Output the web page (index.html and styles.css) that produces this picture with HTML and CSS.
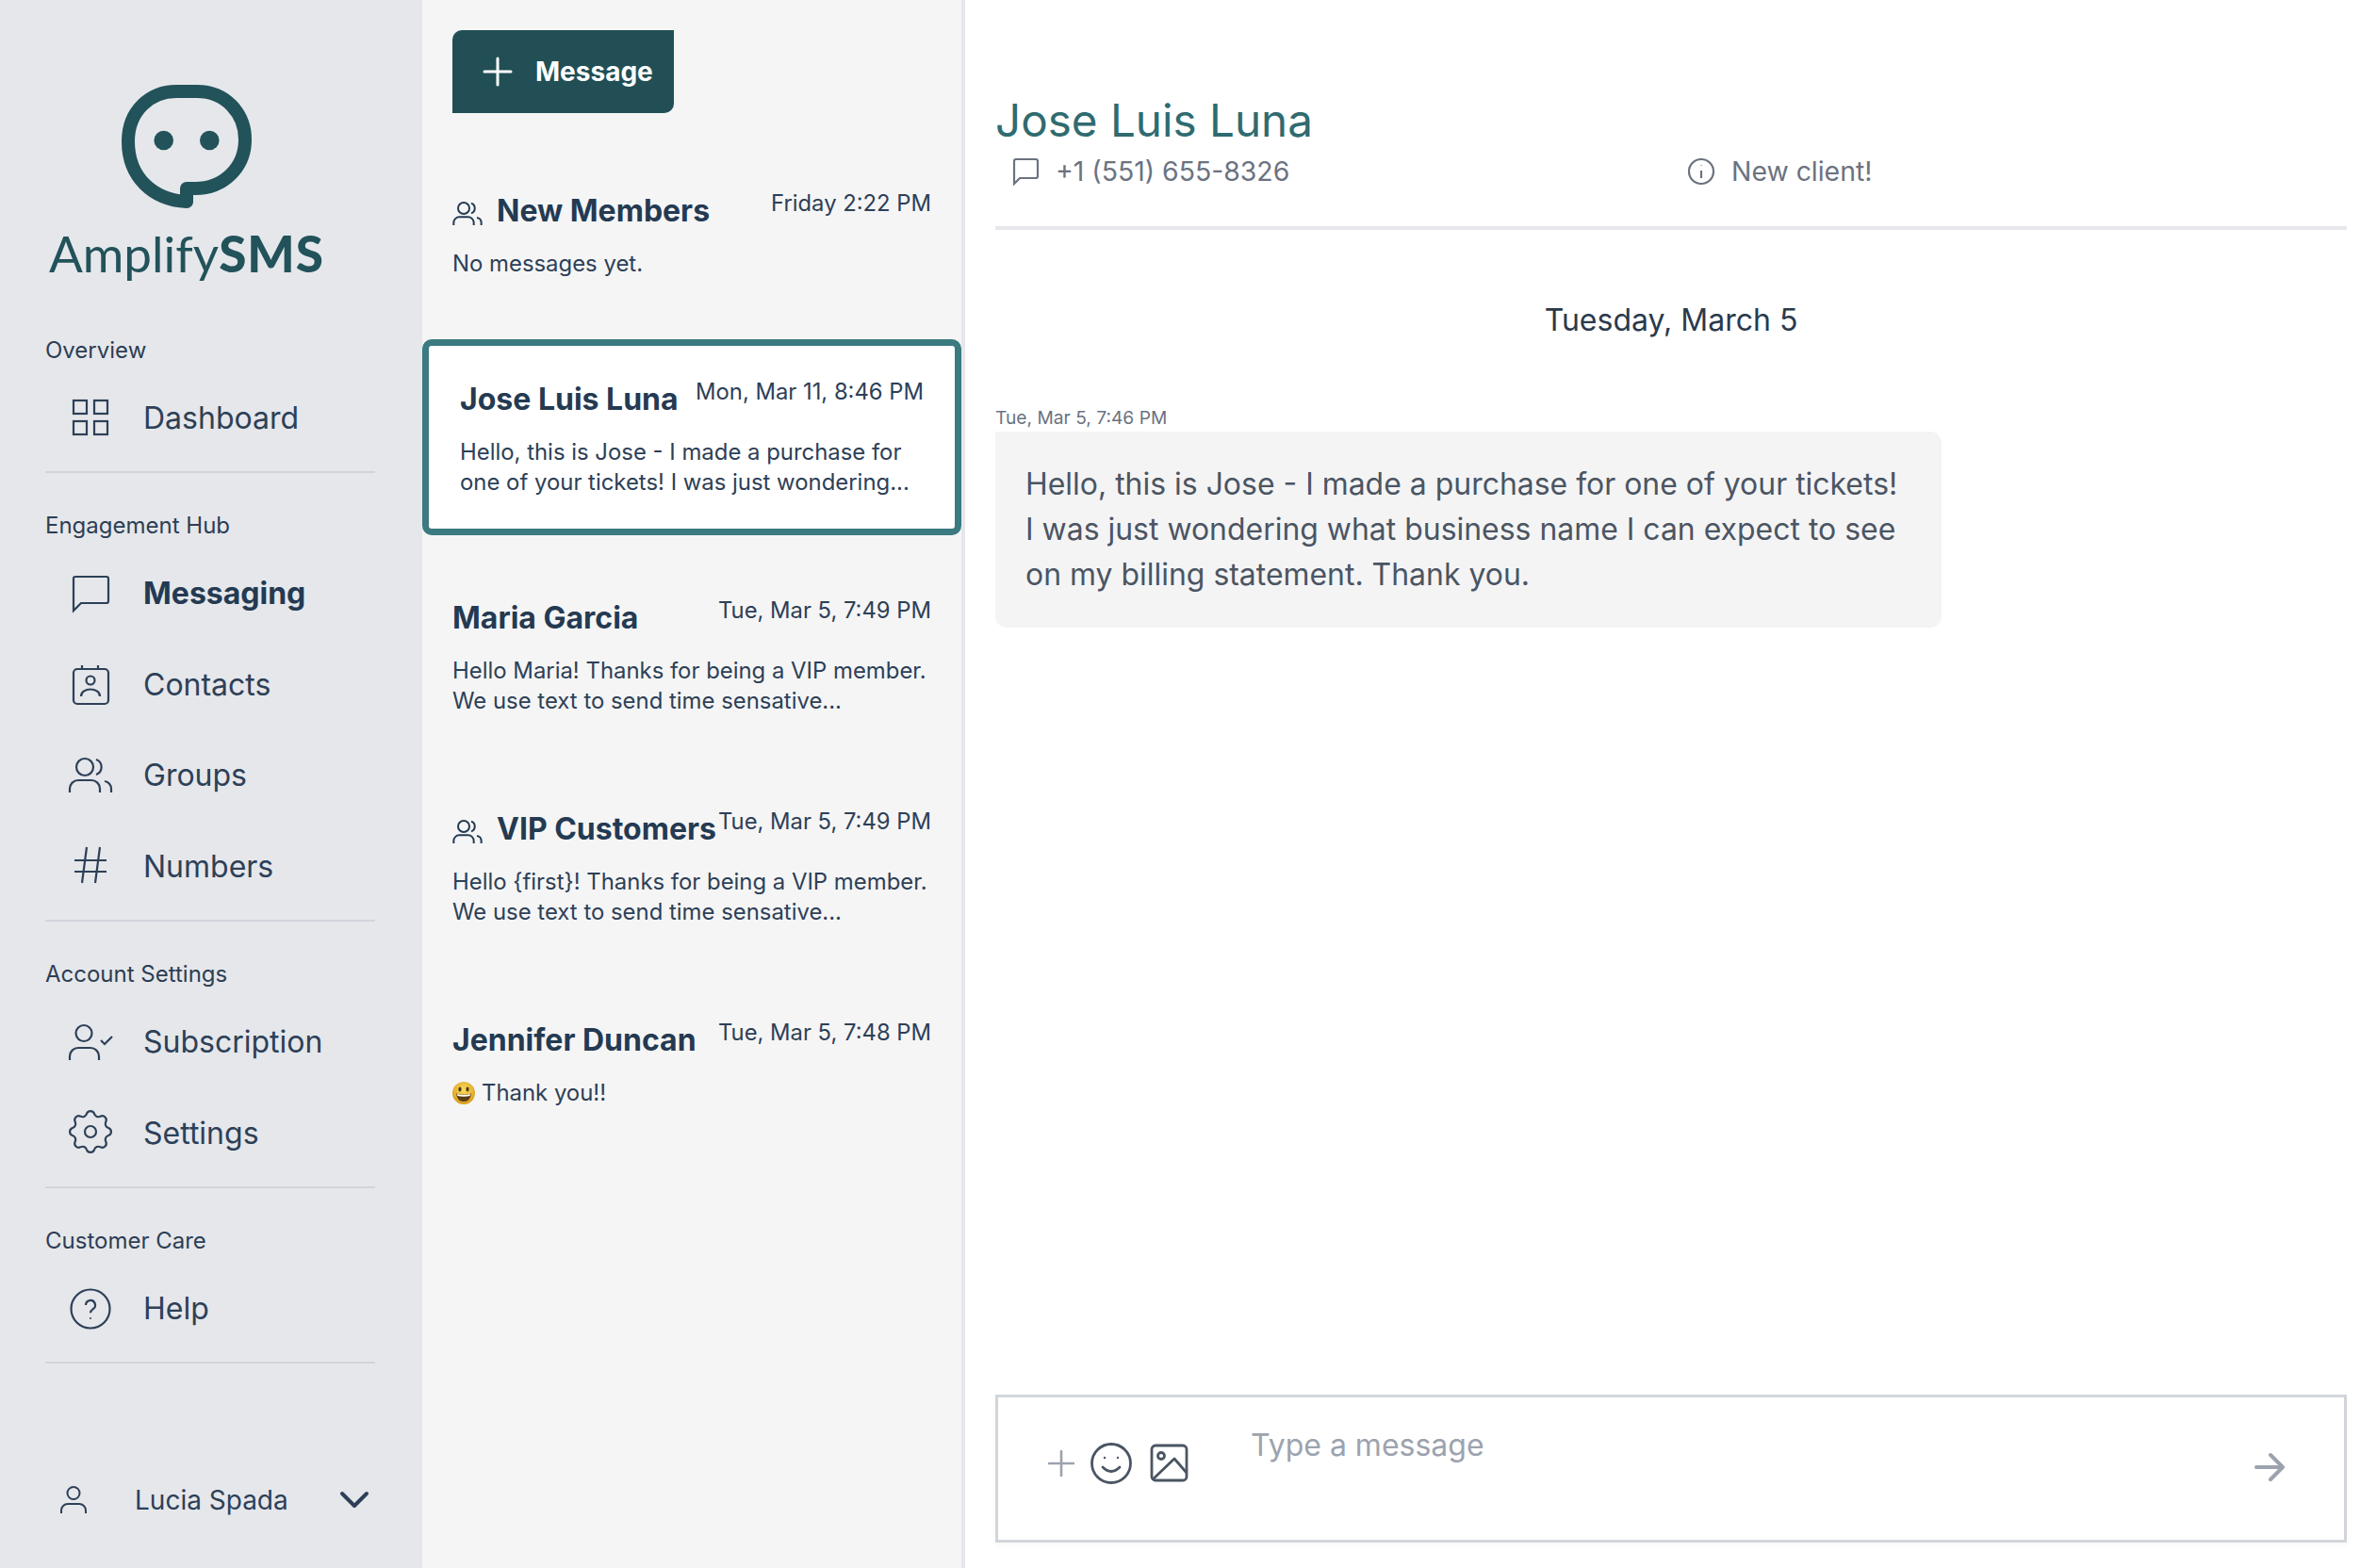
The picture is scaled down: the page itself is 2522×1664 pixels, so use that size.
FILE: index.html
```html
<!DOCTYPE html>
<html lang="en">
<head>
  <meta charset="UTF-8" />
  <title>AmplifySMS - Messaging</title>
  <meta name="viewport" content="width=device-width, initial-scale=1.0" />
  <link rel="stylesheet" href="styles.css">
</head>
<body>
  <svg class="defs" width="0" height="0">
    <symbol id="i-group" viewBox="0 0 48 48">
      <circle cx="18" cy="15" r="9" />
      <path d="M30 7a8.5 8.5 0 0 1 0 16" />
      <path d="M2 42v-4a9 9 0 0 1 9-9h14a9 9 0 0 1 9 9v4" />
      <path d="M39 30a8 8 0 0 1 7 8v4" />
    </symbol>
  </svg>

  <div class="app">
    <aside class="sidebar">
      <div class="brand">
        <svg class="brand-mark" viewBox="0 0 138 131">
          <path d="M69 124C33 122 7 98 7 60C7 28 30 7 58 7H80C110 7 131 30 131 58C131 88 108 110 78 110H69V124" />
          <circle cx="44.7" cy="59" r="10.3" />
          <circle cx="93.3" cy="59" r="10.3" />
        </svg>
        <div class="brand-name">Amplify<b>SMS</b></div>
      </div>

      <div class="nav-label nav-label-first">Overview</div>
      <a class="nav-item">
        <svg class="icon" viewBox="0 0 48 48">
          <rect x="6" y="6" width="14" height="14" /><rect x="28" y="6" width="14" height="14" />
          <rect x="6" y="28" width="14" height="14" /><rect x="28" y="28" width="14" height="14" />
        </svg>
        Dashboard
      </a>
      <hr class="nav-rule" />

      <div class="nav-label">Engagement Hub</div>
      <a class="nav-item active">
        <svg class="icon" viewBox="0 0 48 48">
          <path d="M6 42V8Q6 6 8 6H41Q43 6 43 8V32Q43 34 41 34H14Z" />
        </svg>
        Messaging
      </a>
      <a class="nav-item">
        <svg class="icon" viewBox="0 0 48 48">
          <rect x="6" y="8" width="37" height="37" rx="4" />
          <path d="M15 4v4M32 4v4" />
          <circle cx="24" cy="20" r="4.5" />
          <path d="M14 37c0-10 20-10 20 0" />
        </svg>
        Contacts
      </a>
      <a class="nav-item">
        <svg class="icon"><use href="#i-group" /></svg>
        Groups
      </a>
      <a class="nav-item">
        <svg class="icon" viewBox="0 0 48 48">
          <path d="M7 18H41M7 30H41M20 4L15 42M34 4L29 42" />
        </svg>
        Numbers
      </a>
      <hr class="nav-rule" />

      <div class="nav-label">Account Settings</div>
      <a class="nav-item">
        <svg class="icon" viewBox="0 0 48 48">
          <circle cx="17" cy="14.5" r="8.5" />
          <path d="M2 43v-4a9 9 0 0 1 9-9h13a9 9 0 0 1 9 9v4" />
          <path d="M35 22l4 4l8-8" />
        </svg>
        Subscription
      </a>
      <a class="nav-item">
        <svg class="icon" viewBox="0 0 48 48">
          <path d="M19.95 3.93A4.3 4.3 0 0 1 28.05 3.93A4.5 4.5 0 0 0 34.62 6.65A4.3 4.3 0 0 1 40.35 12.38A4.5 4.5 0 0 0 43.07 18.95A4.3 4.3 0 0 1 43.07 27.05A4.5 4.5 0 0 0 40.35 33.62A4.3 4.3 0 0 1 34.62 39.35A4.5 4.5 0 0 0 28.05 42.07A4.3 4.3 0 0 1 19.95 42.07A4.5 4.5 0 0 0 13.38 39.35A4.3 4.3 0 0 1 7.65 33.62A4.5 4.5 0 0 0 4.93 27.05A4.3 4.3 0 0 1 4.93 18.95A4.5 4.5 0 0 0 7.65 12.38A4.3 4.3 0 0 1 13.38 6.65A4.5 4.5 0 0 0 19.95 3.93Z" />
          <circle cx="24" cy="23" r="6" />
        </svg>
        Settings
      </a>
      <hr class="nav-rule" />

      <div class="nav-label">Customer Care</div>
      <a class="nav-item">
        <svg class="icon" viewBox="0 0 48 48">
          <circle cx="24" cy="24" r="20.5" />
          <path d="M19 20a5 5 0 1 1 7.5 4.3c-1.5 1-2.5 2-2.5 4" />
          <circle class="dot" cx="24" cy="34" r="1" />
        </svg>
        Help
      </a>
      <hr class="nav-rule" />

      <div class="account">
        <svg class="account-icon" viewBox="0 0 32 32">
          <circle cx="16" cy="8.5" r="6.5" />
          <path d="M3 30v-3a7 7 0 0 1 7-7h12a7 7 0 0 1 7 7v3" />
        </svg>
        <span class="account-name">Lucia Spada</span>
        <svg class="chevron" viewBox="0 0 32 20">
          <path d="M3 3L16 16L29 3" />
        </svg>
      </div>
    </aside>

    <section class="threads">
      <button class="new-btn">
        <svg class="new-plus" viewBox="0 0 32 32"><path d="M16 2V30M2 16H30" /></svg>
        Message
      </button>

      <div class="thread-list">
        <div class="thread thread-first">
          <div class="thread-head">
            <h2 class="thread-name"><svg class="group-icon"><use href="#i-group" /></svg>New Members</h2>
            <span class="thread-time">Friday 2:22 PM</span>
          </div>
          <p class="thread-text">No messages yet.</p>
        </div>

        <div class="thread selected">
          <div class="thread-head">
            <h2 class="thread-name">Jose Luis Luna</h2>
            <span class="thread-time">Mon, Mar 11, 8:46 PM</span>
          </div>
          <p class="thread-text">Hello, this is Jose - I made a purchase for<br />one of your tickets! I was just wondering...</p>
        </div>

        <div class="thread">
          <div class="thread-head">
            <h2 class="thread-name">Maria Garcia</h2>
            <span class="thread-time">Tue, Mar 5, 7:49 PM</span>
          </div>
          <p class="thread-text">Hello Maria! Thanks for being a VIP member.<br />We use text to send time sensative...</p>
        </div>

        <div class="thread">
          <div class="thread-head">
            <h2 class="thread-name"><svg class="group-icon"><use href="#i-group" /></svg>VIP Customers</h2>
            <span class="thread-time">Tue, Mar 5, 7:49 PM</span>
          </div>
          <p class="thread-text">Hello {first}! Thanks for being a VIP member.<br />We use text to send time sensative...</p>
        </div>

        <div class="thread">
          <div class="thread-head">
            <h2 class="thread-name">Jennifer Duncan</h2>
            <span class="thread-time">Tue, Mar 5, 7:48 PM</span>
          </div>
          <p class="thread-text thread-emoji">
            <svg class="emoji" viewBox="0 0 24 24">
              <defs>
                <radialGradient id="face" cx="50%" cy="35%" r="65%">
                  <stop offset="0" stop-color="#fbdc5e" />
                  <stop offset="1" stop-color="#d99a1c" />
                </radialGradient>
              </defs>
              <circle cx="12" cy="12" r="12" fill="url(#face)" />
              <ellipse cx="8" cy="8" rx="1.6" ry="2.4" fill="#4a3a16" />
              <ellipse cx="16" cy="8" rx="1.6" ry="2.4" fill="#4a3a16" />
              <path d="M4 12.5Q12 15 20 12.5Q19 21 12 21Q5 21 4 12.5Z" fill="#5b3d14" />
              <path d="M5 13Q12 15.2 19 13L18.6 15Q12 16.6 5.4 15Z" fill="#fff" />
            </svg>
            Thank you!!
          </p>
        </div>
      </div>
    </section>

    <main class="chat">
      <header class="chat-head">
        <h1 class="chat-title">Jose Luis Luna</h1>
        <div class="chat-meta">
          <div class="meta-item meta-phone">
            <svg class="meta-icon" viewBox="0 0 30 30">
              <path d="M3 28V4Q3 2 5 2H26Q28 2 28 4V20Q28 22 26 22H9Z" />
            </svg>
            +1 (551) 655-8326
          </div>
          <div class="meta-item">
            <svg class="meta-icon" viewBox="0 0 30 30">
              <circle cx="15" cy="15" r="13" />
              <path d="M15 14V22M15 8.5V9" />
            </svg>
            New client!
          </div>
        </div>
      </header>

      <div class="day">Tuesday, March 5</div>
      <div class="stamp">Tue, Mar 5, 7:46 PM</div>
      <div class="bubble">Hello, this is Jose - I made a purchase for one of your tickets! I was just wondering what business name I can expect to see on my billing statement. Thank you.</div>

      <div class="composer">
        <div class="tools">
          <svg class="tool-plus" viewBox="0 0 28 28"><path d="M14 1V27M1 14H27" /></svg>
          <svg class="tool-smile" viewBox="0 0 44 44">
            <circle cx="22" cy="22" r="20.5" />
            <path d="M13 26Q22 35 31 26" />
            <circle class="dot" cx="15" cy="16" r="1.2" />
            <circle class="dot" cx="29" cy="16" r="1.2" />
          </svg>
          <svg class="tool-image" viewBox="0 0 41 41">
            <rect x="2" y="2" width="37" height="37" rx="4" />
            <circle cx="12" cy="13" r="3.5" />
            <path d="M3 38L26 16L39 31" />
          </svg>
        </div>
        <div class="placeholder">Type a message</div>
        <svg class="send" viewBox="0 0 32 32"><path d="M2 16H30M17 3L30 16L17 29" /></svg>
      </div>
    </main>
  </div>
</body>
</html>
```

FILE: styles.css
```css
* {
  margin: 0;
  padding: 0;
  box-sizing: border-box;
  font-family: 'Inter', sans-serif;
}
body {
  background: white;
  color: #243a52;
}
.defs {
  position: absolute;
}
.defs symbol {
  overflow: visible;
}
.app {
  display: flex;
  height: 1664px;
  overflow: hidden;
}

/* sidebar */
.sidebar {
  width: 448px;
  flex: none;
  display: flex;
  flex-direction: column;
  background: #e5e7eb;
  padding: 90px 50px 36px 48px;
}
.brand {
  width: 300px;
  text-align: center;
}
.brand-mark {
  display: block;
  width: 138px;
  height: 131px;
  margin: 0 auto;
  fill: #22525a;
}
.brand-mark path {
  fill: none;
  stroke: #22525a;
  stroke-width: 14;
  stroke-linecap: round;
  stroke-linejoin: round;
}
.brand-name {
  font-family: 'Lato', sans-serif;
  font-size: 53px;
  line-height: 72px;
  margin-top: 12px;
  margin-bottom: 4px;
  color: #22525a;
}
.brand-name b {
  font-family: 'Lato', sans-serif;
  font-weight: 900;
  letter-spacing: 1px;
}
.nav-label {
  font-size: 24px;
  line-height: 32px;
  margin-top: 40px;
  color: #2d3e54;
}
.nav-label-first {
  margin-top: 47px;
  margin-bottom: -1px;
}
.nav-item {
  display: flex;
  align-items: center;
  height: 96.5px;
  font-size: 32px;
  color: #2d4057;
}
.nav-label + .nav-item {
  margin-top: 8px;
}
.nav-item.active {
  font-weight: 700;
  color: #243a52;
}
.icon {
  width: 48px;
  height: 48px;
  flex: none;
  margin: 0 32px 0 24px;
  overflow: visible;
  fill: none;
  stroke: #2d4057;
  stroke-width: 2.2;
}
.dot {
  fill: #2d4057;
  stroke: none;
}
.nav-rule {
  border: none;
  height: 2px;
  background: #d1d5db;
  margin-top: 8px;
}
.account {
  display: flex;
  align-items: center;
  margin-top: auto;
  height: 72px;
  margin-left: 14px;
  font-size: 28px;
  color: #2d4057;
}
.account-icon {
  width: 32px;
  height: 32px;
  flex: none;
  fill: none;
  stroke: #2d4057;
  stroke-width: 2;
}
.account-name {
  margin-left: 49px;
}
.chevron {
  width: 32px;
  height: 20px;
  margin-left: auto;
  margin-right: 6px;
  fill: none;
  stroke: #2d4057;
  stroke-width: 4;
  stroke-linecap: round;
  stroke-linejoin: round;
}

/* conversations */
.threads {
  width: 576px;
  flex: none;
  background: #f5f5f5;
  border-right: 4px solid #e5e7eb;
  padding-top: 32px;
}
.new-btn {
  display: flex;
  align-items: center;
  width: 235px;
  height: 88px;
  margin-left: 32px;
  padding-left: 32px;
  background: #214f55;
  color: white;
  border: none;
  border-radius: 10px 0 10px 0;
  font-size: 28px;
  font-weight: 700;
}
.new-plus {
  width: 32px;
  height: 32px;
  margin-right: 24px;
  fill: none;
  stroke: white;
  stroke-width: 3;
  stroke-linecap: round;
}
.thread-list {
  margin-top: 32px;
}
.thread {
  height: 208px;
  margin-bottom: 16px;
  padding: 52px 32px 0;
}
.thread-first {
  height: 192px;
}
.thread.selected {
  background: white;
  border: 7px solid #3a7a80;
  border-radius: 10px;
  padding: 37px 33px 0;
}
.thread-head {
  display: flex;
  justify-content: space-between;
  align-items: flex-start;
}
.thread-name {
  display: flex;
  align-items: center;
  font-size: 32px;
  line-height: 40px;
  font-weight: 700;
  color: #243a52;
  white-space: nowrap;
}
.group-icon {
  width: 32px;
  height: 32px;
  margin: 6px 15px 0 0;
  fill: none;
  stroke: #243a52;
  stroke-width: 3;
  overflow: visible;
}
.thread-time {
  font-size: 23.8px;
  line-height: 24px;
  color: #2d4057;
  white-space: nowrap;
}
.thread-text {
  margin-top: 20px;
  font-size: 23.9px;
  line-height: 32px;
  color: #2d4057;
  white-space: nowrap;
}
.thread-emoji {
  display: flex;
  align-items: center;
}
.emoji {
  width: 24px;
  height: 24px;
  margin-right: 7px;
}

/* chat */
.chat {
  flex: 1;
  display: flex;
  flex-direction: column;
  padding: 100px 32px 27px;
}
.chat-head {
  border-bottom: 4px solid #e5e7eb;
  padding-bottom: 40px;
}
.chat-title {
  font-size: 47.6px;
  line-height: 56px;
  font-weight: 400;
  color: #2f6b70;
}
.chat-meta {
  display: flex;
  margin-top: 8px;
  font-size: 28.4px;
  line-height: 36px;
  color: #6b7280;
}
.meta-item {
  display: flex;
  align-items: center;
}
.meta-phone {
  width: 734px;
  padding-left: 17px;
}
.meta-icon {
  width: 30px;
  height: 30px;
  flex: none;
  margin-right: 17px;
  fill: none;
  stroke: #6b7280;
  stroke-width: 2.2;
}
.day {
  margin-top: 72px;
  text-align: center;
  font-size: 32px;
  line-height: 48px;
  color: #2a3a4d;
}
.stamp {
  margin-top: 67px;
  font-size: 19.2px;
  line-height: 24px;
  color: #6b7280;
}
.bubble {
  width: 1004px;
  margin-top: 3px;
  padding: 32px;
  background: #f4f4f5;
  border-radius: 0 12px 12px 12px;
  font-size: 31.95px;
  line-height: 48px;
  color: #4b5563;
}
.composer {
  display: flex;
  align-items: flex-start;
  height: 157px;
  margin-top: auto;
  border: 3px solid #d1d5db;
  box-shadow: 0 3px 6px rgba(0, 0, 0, 0.03);
}
.tools {
  display: flex;
  align-items: center;
  height: 45px;
  margin: 47px 67px 0 53px;
}
.tool-plus {
  width: 28px;
  height: 28px;
  margin-right: 17px;
  fill: none;
  stroke: #9ca3af;
  stroke-width: 2.6;
  stroke-linecap: round;
}
.tool-smile {
  width: 44px;
  height: 44px;
  margin-right: 19px;
  fill: none;
  stroke: #4b5563;
  stroke-width: 2.8;
  stroke-linecap: round;
}
.tool-smile .dot {
  fill: #4b5563;
}
.tool-image {
  width: 41px;
  height: 41px;
  fill: none;
  stroke: #4b5563;
  stroke-width: 2.8;
  stroke-linejoin: round;
}
.placeholder {
  margin-top: 31px;
  margin-left: -1px;
  font-size: 32px;
  line-height: 40px;
  color: #9ca3af;
}
.send {
  width: 32px;
  height: 32px;
  margin: 58px 63px 0 auto;
  fill: none;
  stroke: #9ca3af;
  stroke-width: 4;
  stroke-linecap: round;
  stroke-linejoin: round;
}
```
